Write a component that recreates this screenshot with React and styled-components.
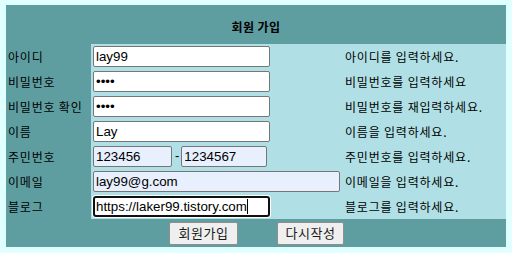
import React from "react";
import styled, { createGlobalStyle } from "styled-components";

const Global = createGlobalStyle`
  html, body { margin: 0; padding: 0; }
  body {
    background: #e0ffff;
    padding: 5px 0 0 6px;
    font-family: "Noto Sans CJK KR", "Noto Sans", sans-serif;
    font-size: 12px;
    color: #000;
  }
`;

const Form = styled.div`
  display: grid;
  width: 500px;
  grid-template-columns: 85px 252px 163px;
  grid-template-rows: 39px repeat(7, 25px) 28px;
`;

const Header = styled.div`
  grid-column: 1 / -1;
  background: #5f9ea0;
  display: flex;
  align-items: center;
  justify-content: center;
  padding-top: 3px;
  font-weight: bold;
  font-size: 12px;
  letter-spacing: 0.4px;
`;

const LabelCell = styled.div`
  background: #5f9ea0;
  display: flex;
  align-items: center;
  padding: 0 1px 1px 2px;
  white-space: nowrap;
  letter-spacing: 0.8px;
`;

const FieldCell = styled.div`
  background: #b0e0e6;
  display: flex;
  align-items: center;
  padding: 0 2px;
  position: relative;
`;

const HintCell = styled.div`
  background: #b0e0e6;
  display: flex;
  align-items: center;
  padding: 0 0 1px 2px;
  white-space: nowrap;
  letter-spacing: 0.8px;
`;

const Input = styled.input`
  box-sizing: border-box;
  width: ${(p) => p.$w}px;
  height: 21px;
  margin: 0;
  padding: 1px 2px;
  border: 1px solid #767676;
  border-radius: 2px;
  background: ${(p) => (p.$auto ? "#e8f0fe" : "#ffffff")};
  font-family: "Liberation Sans", Arial, sans-serif;
  font-size: 13.333px;
  color: #000;
  outline: none;
  ${(p) =>
    p.$focus &&
    `
    border: 2px solid #101010;
    border-radius: 3px;
    padding: 0 1px;
    box-shadow: 0 0 0 1px #ffffff;
  `}
`;

const Dash = styled.span`
  font-family: "Liberation Sans", Arial, sans-serif;
  font-size: 13px;
  margin: 0 2px 0 3px;
  padding-bottom: 2px;
`;

const Caret = styled.span`
  position: absolute;
  left: 156px;
  top: 5px;
  width: 1px;
  height: 15px;
  background: #000;
`;

const Footer = styled.div`
  grid-column: 1 / -1;
  background: #5f9ea0;
  display: flex;
  align-items: center;
  justify-content: center;
  gap: 39px;
  padding-left: 1px;
`;

const Button = styled.button`
  box-sizing: border-box;
  width: ${(p) => p.$w}px;
  height: 23px;
  margin: 0;
  padding: 0 4px 1px;
  border: 1px solid #8f8f8f;
  border-radius: 2px;
  background: #efefef;
  font-family: "Noto Sans CJK KR", sans-serif;
  font-size: 13px;
  letter-spacing: 0.5px;
  color: #1a1a1a;
  display: flex;
  align-items: center;
  justify-content: center;
`;

const rows = [
  { label: "아이디", hint: "아이디를 입력하세요.", field: <Input $w={177} readOnly value="lay99" /> },
  { label: "비밀번호", hint: "비밀번호를 입력하세요", field: <Input $w={177} readOnly type="password" value="1234" /> },
  { label: "비밀번호 확인", hint: "비밀번호를 재입력하세요.", field: <Input $w={177} readOnly type="password" value="1234" /> },
  { label: "이름", hint: "이름을 입력하세요.", field: <Input $w={177} readOnly value="Lay" /> },
  {
    label: "주민번호",
    hint: "주민번호를 입력하세요.",
    field: (
      <>
        <Input $w={79} $auto readOnly value="123456" />
        <Dash>-</Dash>
        <Input $w={86} $auto readOnly value="1234567" />
      </>
    ),
  },
  { label: "이메일", hint: "이메일을 입력하세요.", field: <Input $w={247} $auto readOnly value="lay99@g.com" /> },
  {
    label: "블로그",
    hint: "블로그를 입력하세요.",
    field: (
      <>
        <Input $w={177} $focus readOnly value="https://laker99.tistory.com" />
        <Caret />
      </>
    ),
  },
];

export default function App() {
  return (
    <>
      <Global />
      <Form>
        <Header>회원 가입</Header>
        {rows.map((r) => (
          <React.Fragment key={r.label}>
            <LabelCell>{r.label}</LabelCell>
            <FieldCell>{r.field}</FieldCell>
            <HintCell>{r.hint}</HintCell>
          </React.Fragment>
        ))}
        <Footer>
          <Button $w={69}>회원가입</Button>
          <Button $w={67}>다시작성</Button>
        </Footer>
      </Form>
    </>
  );
}
